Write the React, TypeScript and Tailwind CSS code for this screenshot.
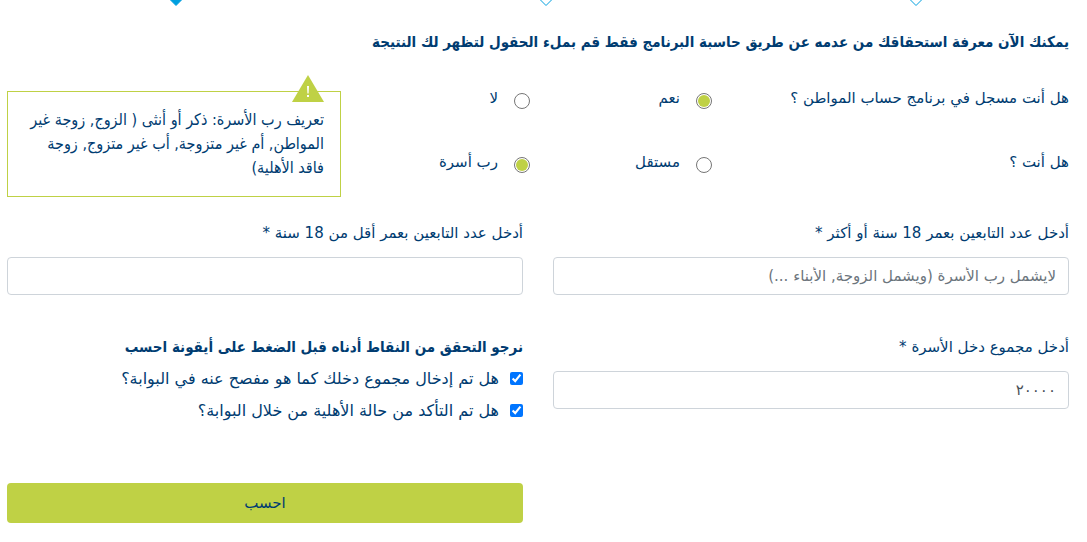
import { useState } from "react";
import type { ReactNode } from "react";

const inputClass =
  "block h-[38px] w-full rounded border border-[#ced4da] bg-white px-3 text-[15px] text-[#495057] placeholder:text-[#6c757d] placeholder:opacity-100";

const headingClass = "font-['DejaVu_Sans_Condensed','DejaVu_Sans',sans-serif] text-[15px] leading-6 font-bold";

function StepMarker({ active = false }: { active?: boolean }) {
  return (
    <svg width="14" height="7" viewBox="0 0 14 7" aria-hidden="true">
      <path
        d="M0.5 -1L7 5.5L13.5 -1"
        fill={active ? "#009fdf" : "white"}
        stroke="#009fdf"
        strokeWidth="1"
      />
    </svg>
  );
}

type RadioProps = {
  name: string;
  value: string;
  label: string;
  selected: string;
  onSelect: (value: string) => void;
};

function Radio({ name, value, label, selected, onSelect }: RadioProps) {
  return (
    <label className="flex items-start gap-4">
      <input
        type="radio"
        name={name}
        value={value}
        checked={selected === value}
        onChange={() => onSelect(value)}
        className="mt-[7px] size-4 shrink-0 appearance-none rounded-full border border-[#767676] bg-clip-content p-px checked:bg-[#bfd145]"
      />
      {label}
    </label>
  );
}

function Field({ id, label, children }: { id: string; label: string; children: ReactNode }) {
  return (
    <div>
      <label htmlFor={id} className="mb-3 block">
        {label}
      </label>
      {children}
    </div>
  );
}

function Check({ label }: { label: string }) {
  return (
    <label className="mt-2 flex items-start gap-[11px] text-base">
      <input type="checkbox" defaultChecked className="mt-[5px] size-[13px] shrink-0 accent-[#0075ff]" />
      {label}
    </label>
  );
}

export default function App() {
  const [registered, setRegistered] = useState("yes");
  const [status, setStatus] = useState("head");

  return (
    <main
      dir="rtl"
      className="overflow-hidden bg-white pr-[18px] pb-5 pl-[7px] font-['DejaVu_Sans',sans-serif] text-[15px] leading-6 text-[#003c71]"
    >
      <div className="flex h-[7px] justify-between pr-[146px] pl-[162px]">
        <StepMarker />
        <StepMarker />
        <StepMarker active />
      </div>

      <form onSubmit={(e) => e.preventDefault()}>
        <h1 className={`mt-[23px] ${headingClass}`}>
          يمكنك الآن معرفة استحقاقك من عدمه عن طريق حاسبة البرنامج فقط قم بملء الحقول لتظهر لك النتيجة
        </h1>

        <div className="mt-8 grid grid-cols-6 gap-x-[30px]">
          <div className="col-span-4">
            <div role="radiogroup" aria-labelledby="registered" className="grid grid-cols-[357fr_182fr_159fr]">
              <span id="registered">هل أنت مسجل في برنامج حساب المواطن ؟</span>
              <Radio name="registered" value="yes" label="نعم" selected={registered} onSelect={setRegistered} />
              <Radio name="registered" value="no" label="لا" selected={registered} onSelect={setRegistered} />
            </div>
            <div role="radiogroup" aria-labelledby="status" className="mt-10 grid grid-cols-[357fr_182fr_159fr]">
              <span id="status">هل أنت ؟</span>
              <Radio name="status" value="independent" label="مستقل" selected={status} onSelect={setStatus} />
              <Radio name="status" value="head" label="رب أسرة" selected={status} onSelect={setStatus} />
            </div>
          </div>

          <aside className="relative col-span-2 mt-[5px] border border-[#bfd145] p-4">
            <svg
              className="absolute -top-[17px] right-4"
              width="32"
              height="27"
              viewBox="0 0 32 27"
              aria-hidden="true"
            >
              <path d="M16 0L32 27H0Z" fill="#bfd145" />
              <path d="M15 11H17L16.6 18.5H15.4ZM15 20H17V22H15Z" fill="white" />
            </svg>
            <p className="font-['DejaVu_Sans_Condensed','DejaVu_Sans',sans-serif] text-base">
              تعريف رب الأسرة: ذكر أو أنثى ( الزوج, زوجة غير
              <br />
              المواطن, أم غير متزوجة, أب غير متزوج, زوجة
              <br />
              فاقد الأهلية)
            </p>
          </aside>
        </div>

        <div className="mt-6 grid grid-cols-2 gap-x-[30px] gap-y-10">
          <Field id="adults" label="أدخل عدد التابعين بعمر 18 سنة أو أكثر *">
            <input id="adults" className={inputClass} placeholder="لايشمل رب الأسرة (ويشمل الزوجة, الأبناء ...)" />
          </Field>
          <Field id="minors" label="أدخل عدد التابعين بعمر أقل من 18 سنة *">
            <input id="minors" className={inputClass} />
          </Field>
          <Field id="income" label="أدخل مجموع دخل الأسرة *">
            <input id="income" className={inputClass} defaultValue="٢٠٠٠٠" />
          </Field>
          <div>
            <h2 className={headingClass}>نرجو التحقق من النقاط أدناه قبل الضغط على أيقونة احسب</h2>
            <Check label="هل تم إدخال مجموع دخلك كما هو مفصح عنه في البوابة؟" />
            <Check label="هل تم التأكد من حالة الأهلية من خلال البوابة؟" />
            <button type="submit" className="mt-[60px] block h-10 w-full rounded bg-[#bfd145] text-center">
              احسب
            </button>
          </div>
        </div>
      </form>
    </main>
  );
}
